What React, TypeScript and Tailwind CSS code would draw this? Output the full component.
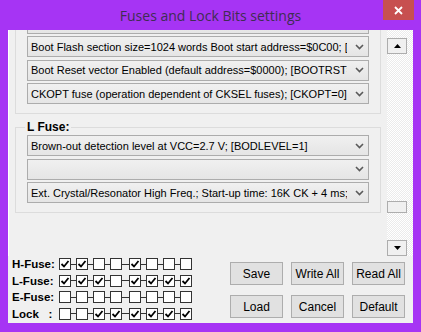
import React from "react";

const hFuseCombos = [
  "Reset Disabled (Enable PC6 as i/o pin); [RSTDISBL=0]",
  "Watch-dog Timer always on; [WDTON=0]",
  "Serial program downloading (SPI) enabled; [SPIEN=0]",
  "Preserve EEPROM memory through the Chip Erase cycle; [EESAVE=0]",
  "Boot Flash section size=1024 words Boot start address=$0C00; [BOOTSZ=00]",
  "Boot Reset vector Enabled (default address=$0000); [BOOTRST=0]",
  "CKOPT fuse (operation dependent of CKSEL fuses); [CKOPT=0]",
];

const lFuseCombos = [
  "Brown-out detection level at VCC=2.7 V; [BODLEVEL=1]",
  "",
  "Ext. Crystal/Resonator High Freq.; Start-up time: 16K CK + 4 ms; [CKSEL=1111 SUT=11]",
];

const fuseRows: { label: string; bits: boolean[] }[] = [
  { label: "H-Fuse:", bits: [true, true, false, false, true, false, false, false] },
  { label: "L-Fuse:", bits: [true, true, true, false, true, true, true, true] },
  { label: "E-Fuse:", bits: [false, false, false, false, false, false, false, false] },
  { label: "Lock   :", bits: [false, false, true, true, true, true, true, true] },
];

// spacing between the bit boxes, the middle one is a bit wider
const links = ["w-[5px]", "w-[5px]", "w-[5px]", "w-[7px]", "w-[5px]", "w-[5px]", "w-[5px]"];

function Combo({ text }: { text: string }) {
  return (
    <div className="h-[21px] flex items-center border border-[#acacac] bg-gradient-to-b from-[#f0f0f0] to-[#e5e5e5]">
      <div className="w-[319px] pl-[3px] overflow-hidden whitespace-nowrap text-[11px] leading-[14px] text-black">
        {text}
      </div>
      <div className="flex-1 flex justify-end pr-[4px]">
        <svg width="9" height="6" viewBox="0 0 9 6">
          <path d="M1 1 L4.5 4.5 L8 1" fill="none" stroke="#5a5a5a" strokeWidth="1.6" />
        </svg>
      </div>
    </div>
  );
}

function GroupBox({ title, items }: { title: string; items: string[] }) {
  return (
    <fieldset className="mx-[6px] border border-[#dcdcdc] px-[11px] pb-[9px]">
      <legend className="px-[2px] -ml-[2px] text-[12px] leading-[14px] font-bold text-black">{title}</legend>
      <div className="mt-[1px] flex flex-col gap-[2.5px]">
        {items.map((t, i) => (
          <Combo key={i} text={t} />
        ))}
      </div>
    </fieldset>
  );
}

function CheckBox({ on }: { on: boolean }) {
  return (
    <div className="w-[12px] h-[12px] border border-[#333333] bg-white flex items-center justify-center">
      {on && (
        <svg width="10" height="10" viewBox="0 0 10 10">
          <path d="M1.5 5 L4 7.5 L8.5 2" fill="none" stroke="#000" strokeWidth="1.8" />
        </svg>
      )}
    </div>
  );
}

function ScrollArrow({ up }: { up: boolean }) {
  return (
    <div className="w-[20px] h-[16px] border border-[#adadad] bg-[#f0f0f0] flex items-center justify-center">
      <svg width="7" height="4" viewBox="0 0 7 4">
        <path d={up ? "M0 4 L3.5 0 L7 4 Z" : "M0 0 L3.5 4 L7 0 Z"} fill="#000" />
      </svg>
    </div>
  );
}

function Btn({ label }: { label: string }) {
  return (
    <button className="w-[53px] h-[23px] border border-[#adadad] bg-[#e1e1e1] text-[12px] leading-[14px] text-black">
      {label}
    </button>
  );
}

export default function App() {
  return (
    <div className="w-[421px] h-[332px] bg-[#a634f4] flex flex-col font-['Liberation_Sans',sans-serif] overflow-hidden">
      {/* title bar */}
      <div className="h-[30px] grid grid-cols-[38px_1fr_38px] shrink-0">
        <div />
        <div className="flex items-center justify-center text-[14px] text-[#3f2d52] font-['Open_Sans',sans-serif] whitespace-nowrap">
          Fuses and Lock Bits settings
        </div>
        <div className="w-[31px] h-[20px] bg-[#c75050] flex items-center justify-center">
          <svg width="9" height="9" viewBox="0 0 9 9">
            <path d="M1 1 L8 8 M8 1 L1 8" stroke="#fff" strokeWidth="1.8" />
          </svg>
        </div>
      </div>

      {/* client area */}
      <div className="mx-[8px] h-[293px] bg-[#f0f0f0] flex flex-col">
        <div className="h-[226px] flex shrink-0">
          <div className="flex-1 overflow-hidden border-l border-white">
            <div className="-mt-[103px] flex flex-col gap-[6px]">
              <GroupBox title="H Fuse:" items={hFuseCombos} />
              <GroupBox title="L Fuse:" items={lFuseCombos} />
            </div>
          </div>
          <div className="w-[26px] pt-[8px] flex flex-col bg-[image:repeating-conic-gradient(#ffffff_0%_25%,#ebebeb_0%_50%)] bg-[length:2px_2px]">
            <ScrollArrow up />
            <div className="flex-1 flex flex-col justify-end pb-[27px]">
              <div className="w-[20px] h-[12px] border border-[#adadad] bg-[#f0f0f0]" />
            </div>
            <ScrollArrow up={false} />
          </div>
        </div>

        {/* fuse bits + buttons */}
        <div className="flex-1 flex pl-[4px] pr-[8px]">
          <div className="flex flex-col">
            {fuseRows.map((row) => (
              <div key={row.label} className="h-[16.5px] flex items-center">
                <div className="w-[47px] text-[11.5px] leading-[14px] font-bold text-black whitespace-pre">{row.label}</div>
                {row.bits.map((b, i) => (
                  <React.Fragment key={i}>
                    <CheckBox on={b} />
                    {i < 7 && <div className={`${links[i]} h-px bg-[#333333]`} />}
                  </React.Fragment>
                ))}
              </div>
            ))}
          </div>
          <div className="ml-auto pt-[6px] grid grid-cols-3 gap-x-[8px] gap-y-[10px] content-start">
            <Btn label="Save" />
            <Btn label="Write All" />
            <Btn label="Read All" />
            <Btn label="Load" />
            <Btn label="Cancel" />
            <Btn label="Default" />
          </div>
        </div>
      </div>
    </div>
  );
}
